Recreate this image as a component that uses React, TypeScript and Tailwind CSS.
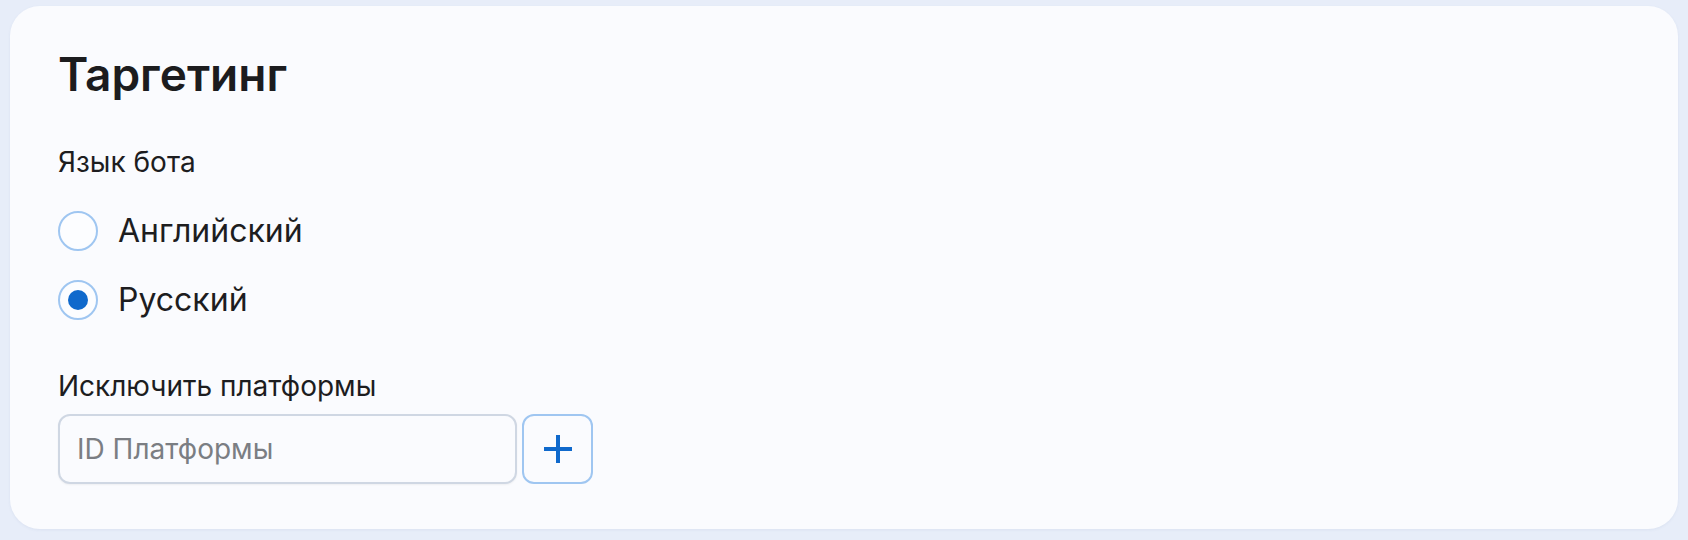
import { useState } from 'react'

const languages = [
  { id: 'en', label: 'Английский' },
  { id: 'ru', label: 'Русский' },
]

function Radio({ checked, label, onSelect }: { checked: boolean; label: string; onSelect: () => void }) {
  return (
    <button type="button" onClick={onSelect} className="flex h-[40px] items-center gap-[20px] text-left">
      <span className="flex h-[40px] w-[40px] items-center justify-center rounded-full border-2 border-[#9fc6f1] bg-[#fcfdff]">
        {checked && <span className="h-[20px] w-[20px] rounded-full bg-[#0f69cc]" />}
      </span>
      <span className="text-[32px] leading-[40px] text-[#1d1d1f]">{label}</span>
    </button>
  )
}

export default function App() {
  const [lang, setLang] = useState('ru')
  const [platform, setPlatform] = useState('')

  return (
    <div
      className="flex h-[540px] w-full bg-[#e7edf9] px-[10px] pt-[6px] pb-[11px]"
      style={{ fontFamily: 'Inter, "Noto Sans", sans-serif' }}
    >
      <div className="flex flex-1 flex-col rounded-[30px] bg-[#fafbfe] px-[48px] pt-[42px] shadow-[0_1px_3px_rgba(80,100,150,0.08)]">
        <h2 className="text-[46px] leading-[52px] font-semibold text-[#1c1c1e]">Таргетинг</h2>

        <p className="mt-[46px] text-[28px] leading-[32px] text-[#1d1d1f]">Язык бота</p>

        <div className="mt-[33px] flex flex-col gap-[29px]">
          {languages.map((l) => (
            <Radio key={l.id} checked={lang === l.id} label={l.label} onSelect={() => setLang(l.id)} />
          ))}
        </div>

        <p className="mt-[50px] text-[28px] leading-[32px] text-[#1d1d1f]">Исключить платформы</p>

        <div className="mt-[12px] flex gap-[5px]">
          <input
            value={platform}
            onChange={(e) => setPlatform(e.target.value)}
            placeholder="ID Платформы"
            className="h-[70px] w-[459px] rounded-[12px] border-2 border-[#cfd7e3] bg-[#fafbfe] px-[17px] text-[28px] text-[#1d1d1f] shadow-[0_1px_2px_rgba(0,0,0,0.05)] outline-none placeholder:text-[#7b7e83]"
          />
          <button
            type="button"
            className="flex h-[70px] w-[71px] items-center justify-center rounded-[12px] border-2 border-[#9fc6f1] bg-[#fafbfe]"
          >
            <svg width="30" height="30" viewBox="0 0 30 30" fill="none">
              <path d="M15 1v28M1 15h28" stroke="#0f69cc" strokeWidth="4" />
            </svg>
          </button>
        </div>
      </div>
    </div>
  )
}
